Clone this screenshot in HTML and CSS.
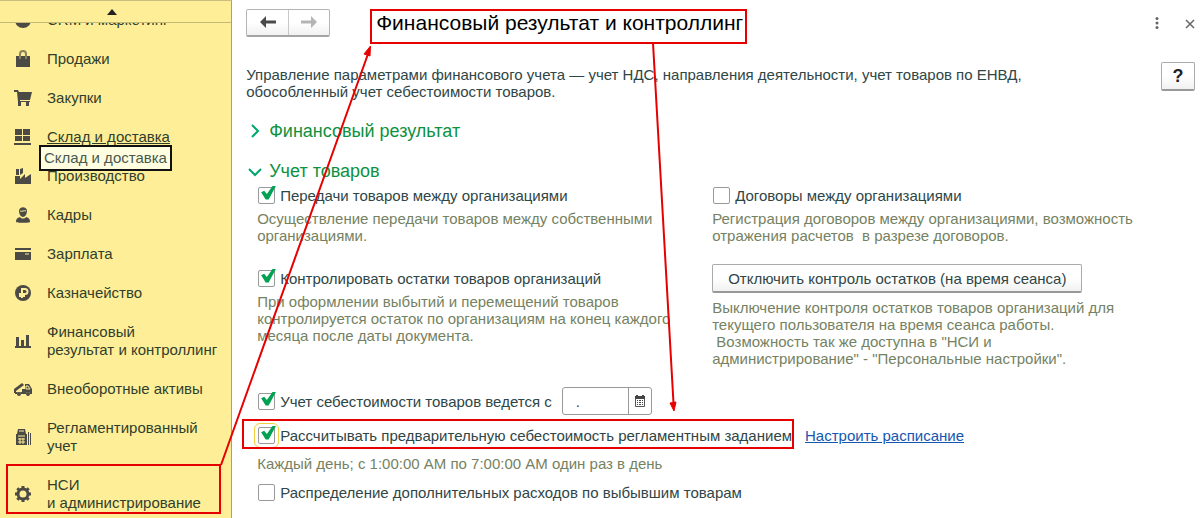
FILE: index.html
```html
<!DOCTYPE html>
<html lang="ru">
<head>
    <meta charset="UTF-8">
    <meta name="viewport" content="width=device-width, initial-scale=1.0">
    <title>Финансовый результат и контроллинг</title>
    <link rel="stylesheet" href="styles.css">
</head>
<body>

    <div class="app">
        <nav class="sidebar">
            <button class="scroll-up" aria-label="Вверх">
                <svg width="10" height="6" viewBox="0 0 10 6"><path d="M0 6L5 0L10 6Z"/></svg>
            </button>
            <div class="menu-view">
                <div class="menu">
                    <a href="#" class="menu-item">
                        <svg class="icon" viewBox="0 0 18 18"><circle cx="9" cy="9" r="8"/></svg>
                        <span>CRM и маркетинг</span>
                    </a>
                    <a href="#" class="menu-item">
                        <svg class="icon" viewBox="0 0 18 18"><path d="M2 6h14v11H2z"/><path class="line" d="M6 9V4a3 3 0 0 1 6 0v5"/></svg>
                        <span>Продажи</span>
                    </a>
                    <a href="#" class="menu-item">
                        <svg class="icon" viewBox="0 0 18 18"><path d="M0 1h4l1 2h13l-2 8H6v1h10v1H4L3 3H0z"/><path d="M4 13h3v4H4zM12 13h3v4h-3z"/></svg>
                        <span>Закупки</span>
                    </a>
                    <a href="#" class="menu-item current">
                        <svg class="icon" viewBox="0 0 18 18"><path d="M1 1h7v6H1zM9 1h7v6H9zM1 8h7v5H1zM9 8h7v5H9zM0 15h17v2H0z"/></svg>
                        <span>Склад и доставка</span>
                        <span class="tooltip">Склад и доставка</span>
                    </a>
                    <a href="#" class="menu-item">
                        <svg class="icon" viewBox="0 0 18 18"><path d="M1 17V9h5v3l5-5v4l6-4v10zM2 2h3v6H2zM6 2l3-1v5L6 8z"/></svg>
                        <span>Производство</span>
                    </a>
                    <a href="#" class="menu-item">
                        <svg class="icon" viewBox="0 0 18 18"><path d="M5 5c0-5 8-5 8 0 0 3-2 6-4 6S5 8 5 5zM2 16c0-3 1-4 4-5 1 2 5 2 6 0 3 1 4 2 4 5 0 1-14 1-14 0z"/><path class="cut" d="M6 5c2 1 4-1 6 0"/></svg>
                        <span>Кадры</span>
                    </a>
                    <a href="#" class="menu-item">
                        <svg class="icon" viewBox="0 0 18 18"><path d="M1 3h16v2H1zM1 7h16v8H1z"/><path class="cut" d="M11 9h4"/></svg>
                        <span>Зарплата</span>
                    </a>
                    <a href="#" class="menu-item">
                        <svg class="icon" viewBox="0 0 18 18"><circle cx="9" cy="9" r="8"/><path class="cut bold" d="M8 14V5h3a2 2 0 0 1 0 5H5M5 12h6"/></svg>
                        <span>Казначейство</span>
                    </a>
                    <a href="#" class="menu-item">
                        <svg class="icon" viewBox="0 0 18 18"><path d="M2 5h3v10H2zM7 8h3v7H7zM12 3h3v12h-3zM1 14h16v2H1z"/></svg>
                        <span>Финансовый<br>результат и контроллинг</span>
                    </a>
                    <a href="#" class="menu-item">
                        <svg class="icon" viewBox="0 0 18 18"><path d="M0 9l8-6 2 2-8 6v2H0zM11 4h4l3 5v5h-2a2 2 0 0 0-4 0H7a2 2 0 0 0-4 0H1v-2h7V9h3z"/><circle cx="5" cy="14" r="2"/><circle cx="14" cy="14" r="2"/><path class="cut" d="M12 6h2l2 3h-4z"/></svg>
                        <span>Внеоборотные активы</span>
                    </a>
                    <a href="#" class="menu-item">
                        <svg class="icon" viewBox="0 0 18 18"><path d="M4 1h7l1 5h1v11H2V6h1zM14 4h1v13h-1zM16 5h1v12h-1z"/><path class="cut" d="M5 3h5M4 8h7M4 11h7M4 14h7M6 10v6M9 10v6"/></svg>
                        <span>Регламентированный<br>учет</span>
                    </a>
                    <a href="#" class="menu-item">
                        <svg class="icon" viewBox="0 0 18 18"><circle class="gear" cx="9" cy="9" r="5"/><path class="teeth" d="M9 1v3M9 14v3M1 9h3M14 9h3M3.3 3.3l2 2M12.7 12.7l2 2M3.3 14.7l2-2M12.7 5.3l2-2"/></svg>
                        <span>НСИ<br>и администрирование</span>
                    </a>
                </div>
            </div>
        </nav>

        <main class="content">
            <header class="header">
                <div class="history">
                    <button aria-label="Назад"><svg width="16" height="12" viewBox="0 0 16 12"><path d="M0 6L6 0V4.500H16V7.500H6V12Z"/></svg></button>
                    <button aria-label="Вперед" disabled><svg width="16" height="12" viewBox="0 0 16 12"><path d="M16 6L10 0V4.500H0V7.500H10V12Z"/></svg></button>
                </div>
                <h1>Финансовый результат и контроллинг</h1>
                <div class="window-tools">
                    <button aria-label="Еще"><svg width="4" height="12" viewBox="0 0 4 12"><circle cx="2" cy="1.500" r="1.500"/><circle cx="2" cy="6" r="1.500"/><circle cx="2" cy="10.500" r="1.500"/></svg></button>
                    <button aria-label="Закрыть"><svg width="10" height="10" viewBox="0 0 10 10"><path class="cross" d="M1 1L9 9M9 1L1 9"/></svg></button>
                </div>
            </header>

            <div class="intro">
                <p>Управление параметрами финансового учета — учет НДС, направления деятельности, учет товаров по ЕНВД,<br>обособленный учет себестоимости товаров.</p>
                <button class="btn help">?</button>
            </div>

            <h2><svg width="14" height="14" viewBox="0 0 14 14"><path d="M4 1L10 7L4 13"/></svg>Финансовый результат</h2>
            <h2><svg width="14" height="14" viewBox="0 0 14 14"><path d="M1 5L7 11L13 5"/></svg>Учет товаров</h2>

            <div class="settings">
                <div class="cell">
                    <label class="check"><input type="checkbox" checked>Передачи товаров между организациями</label>
                    <p class="hint">Осуществление передачи товаров между собственными<br>организациями.</p>
                </div>
                <div class="cell">
                    <label class="check"><input type="checkbox">Договоры между организациями</label>
                    <p class="hint">Регистрация договоров между организациями, возможность<br>отражения расчетов&nbsp; в разрезе договоров.</p>
                </div>
                <div class="cell lowered">
                    <label class="check"><input type="checkbox" checked>Контролировать остатки товаров организаций</label>
                    <p class="hint">При оформлении выбытий и перемещений товаров<br>контролируется остаток по организациям на конец каждого<br>месяца после даты документа.</p>
                </div>
                <div class="cell">
                    <button class="btn">Отключить контроль остатков (на время сеанса)</button>
                    <p class="hint">Выключение контроля остатков товаров организаций для<br>текущего пользователя на время сеанса работы.<br>&nbsp;Возможность так же доступна в "НСИ и<br>администрирование" - "Персональные настройки".</p>
                </div>
            </div>

            <div class="costs">
                <div class="row">
                    <label class="check"><input type="checkbox" checked>Учет себестоимости товаров ведется с</label>
                    <div class="date">
                        <input type="text" value="." aria-label="Дата начала учета">
                        <button aria-label="Выбрать дату"><svg width="12" height="12" viewBox="0 0 12 12"><path d="M1 1h1V0h2v1h4V0h2v1h1v3H1z"/><path class="grid" d="M1.500 4v7.500h9V4"/><path d="M3 5h1v1H3zM5 5h2v1H5zM8 5h1v1H8zM3 7h1v1H3zM5 7h2v1H5zM8 7h1v1H8zM3 9h1v1H3zM5 9h2v1H5zM8 9h1v1H8z"/></svg></button>
                    </div>
                </div>
                <div class="row">
                    <label class="check focused"><input type="checkbox" checked>Рассчитывать предварительную себестоимость регламентным заданием</label>
                    <a href="#" class="schedule">Настроить расписание</a>
                </div>
                <p class="hint">Каждый день; с 1:00:00 AM по 7:00:00 AM один раз в день</p>
                <label class="check"><input type="checkbox">Распределение дополнительных расходов по выбывшим товарам</label>
            </div>
        </main>

        <!-- Red frames and arrows over the form -->
        <svg class="marks" width="1200" height="518" viewBox="0 0 1200 518">
            <rect x="7" y="465" width="213" height="48"/>
            <rect x="371" y="10" width="375" height="33"/>
            <rect x="243" y="420" width="550" height="28"/>
            <path d="M221 465L368 54M653 43L673.500 403"/>
            <path class="tip" d="M370.500 46L370 56L364 54ZM674 411L670 403L676 402Z"/>
        </svg>
    </div>

</body>
</html>
```
FILE: styles.css
```css
* {
    box-sizing: border-box;
}

body {
    margin: 0;
    background: #fff;
    color: #2f4646;
    font-family: "Liberation Sans", Arial, sans-serif;
    font-size: 15px;
    line-height: 17px;
}

h1, h2, p {
    margin: 0;
    font-weight: normal;
}

button, input {
    margin: 0;
    padding: 0;
    font: inherit;
    color: inherit;
}

button {
    border: none;
    background: none;
}

.app {
    position: relative;
    display: flex;
    height: 100vh;
    overflow: hidden;
}

/* Sidebar */
.sidebar {
    display: flex;
    flex-direction: column;
    flex: 0 0 232px;
    background: #ffee98;
    border-top: 1px solid #c9bd80;
    border-right: 1px solid #a9a173;
}

.scroll-up {
    flex: 0 0 22px;
    display: flex;
    align-items: center;
    justify-content: center;
    padding-right: 8px;
    border-bottom: 1px solid #c5b978;
    fill: #222;
}

.menu-view {
    flex: 1;
    overflow: hidden;
}

/* List is scrolled down a little */
.menu {
    margin-top: -22px;
}

.menu-item {
    position: relative;
    display: flex;
    align-items: center;
    gap: 15px;
    padding: 10px 14px 11px;
    color: #2f3f2c;
    line-height: 18px;
    text-decoration: none;
    white-space: nowrap;
}

.icon {
    flex: none;
    width: 18px;
    height: 18px;
    fill: #4b4a45;
}

.icon .line,
.icon .gear,
.icon .teeth {
    fill: none;
    stroke: #4b4a45;
    stroke-width: 3;
}

.icon .line {
    stroke: #8a825d;
    stroke-width: 2;
}

.icon .cut {
    fill: none;
    stroke: #ffee98;
    stroke-width: 1;
}

.icon .bold {
    stroke-width: 2;
}

.current {
    z-index: 1;
    text-decoration: underline;
}

.tooltip {
    position: absolute;
    left: 39px;
    top: 27px;
    display: inline-block;
    padding: 2px 3px;
    border: 2px solid #111;
    background: #fffee1;
    color: #47594f;
}

/* Form */
.content {
    flex: 1;
    min-width: 0;
    padding: 9px 5px 0 14px;
}

.header {
    display: flex;
    align-items: center;
    height: 28px;
}

.history {
    display: flex;
    height: 28px;
    border: 1px solid #b4b4b4;
    border-bottom: 2px solid #a4a4a4;
    border-radius: 2px;
    background: linear-gradient(#fff 50%, #f1f1f1);
}

.history button {
    width: 41px;
    fill: #4a4a4a;
}

.history button:disabled {
    border-left: 1px solid #c8c8c8;
    fill: #b5b5b5;
}

h1 {
    flex: 1;
    margin-left: 46px;
    color: #000;
    font-size: 21px;
    line-height: 28px;
}

.window-tools {
    display: flex;
    gap: 26px;
    fill: #666;
}

.cross {
    stroke: #666;
    stroke-width: 1.500;
}

.intro {
    display: flex;
    justify-content: space-between;
    margin: 25px 0 21px;
}

.intro p {
    margin-top: 4px;
}

.btn {
    height: 29px;
    padding: 0 15px;
    border: 1px solid #aaa;
    border-bottom: 2px solid #999;
    border-radius: 2px;
    background: linear-gradient(#fff 50%, #f1f1f1);
}

.help {
    width: 34px;
    padding: 0;
    color: #222;
    font-size: 18px;
    font-weight: bold;
}

h2 {
    display: flex;
    align-items: center;
    gap: 7px;
    margin: 0 0 20px 2px;
    color: #0d9140;
    font-size: 18px;
    line-height: 20px;
}

h2 svg {
    fill: none;
    stroke: #00a86b;
    stroke-width: 2;
}

.settings {
    display: grid;
    grid-template-columns: 455px 1fr;
    row-gap: 20px;
    margin: -16px 0 20px 11px;
}

.lowered {
    padding-top: 4px;
}

.check {
    display: flex;
    align-items: center;
    gap: 5px;
    height: 20px;
    white-space: nowrap;
}

.check input {
    position: relative;
    appearance: none;
    flex: none;
    width: 17px;
    height: 17px;
    margin-left: 1px;
    border: 1px solid #999;
    border-radius: 2px;
    background: #fff;
}

.check input:checked::after {
    content: "";
    position: absolute;
    left: 2px;
    top: -2px;
    width: 15px;
    height: 14px;
    background: #00a150;
    clip-path: polygon(0 48%, 20% 38%, 38% 60%, 78% 0, 100% 0, 50% 100%, 30% 100%);
}

.focused input {
    outline: 1px solid #f2cf3c;
    outline-offset: 3px;
}

.hint {
    margin-top: 5px;
    color: #758262;
}

.cell .btn + .hint {
    margin-top: 6px;
}

.costs {
    display: flex;
    flex-direction: column;
    gap: 10px;
    margin-left: 11px;
}

.costs .hint {
    margin: 0;
}

.row {
    display: flex;
    align-items: center;
    gap: 10px;
}

.schedule {
    margin-left: 3px;
    color: #1557b0;
}

.date {
    display: flex;
    height: 28px;
    border: 1px solid #999;
    border-radius: 3px;
}

.date input {
    width: 65px;
    padding-left: 13px;
    border: none;
    background: none;
}

.date button {
    width: 23px;
    border-left: 1px solid #999;
    fill: #444;
}

.date .grid {
    fill: none;
    stroke: #555;
}

/* Annotations */
.marks {
    position: absolute;
    left: 0;
    top: 0;
    z-index: 2;
    fill: none;
    stroke: #e60000;
    stroke-width: 2;
    pointer-events: none;
}

.marks .tip {
    fill: #e60000;
    stroke-width: 1;
}
```
